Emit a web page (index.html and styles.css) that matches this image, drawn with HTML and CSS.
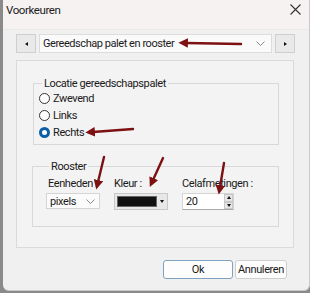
FILE: index.html
```html
<!DOCTYPE html>
<html lang="nl">
<head>
  <meta charset="UTF-8">
  <title>Voorkeuren</title>
  <link rel="stylesheet" href="styles.css">
</head>
<body>
  <div class="dialog">
    <div class="titlebar">
      <span class="title">Voorkeuren</span>
      <svg class="close" width="11" height="11" viewBox="0 0 11 11">
        <path d="M0.5 0.5 L10.5 10.5 M10.5 0.5 L0.5 10.5" stroke="#333" stroke-width="1.1"/>
      </svg>
    </div>

    <div class="nav">
      <button class="nav-btn"><span class="tri-left"></span></button>
      <div class="combo">
        <span>Gereedschap palet en rooster</span>
        <svg class="chev" width="9" height="5" viewBox="0 0 9 5"><path d="M0.5 0.5 L4.5 4.5 L8.5 0.5" fill="none" stroke="#888" stroke-width="1"/></svg>
      </div>
      <button class="nav-btn"><span class="tri-right"></span></button>
    </div>

    <div class="panel">
      <fieldset class="group group-loc">
        <legend>Locatie gereedschapspalet</legend>
        <label class="radio"><span class="dot"></span>Zwevend</label>
        <label class="radio"><span class="dot"></span>Links</label>
        <label class="radio"><span class="dot checked"></span>Rechts</label>
      </fieldset>

      <fieldset class="group group-grid">
        <legend>Rooster</legend>
        <div class="fields">
          <div class="field">
            <div class="lbl lbl-first">Eenheden</div>
            <div class="select">
              <span>pixels</span>
              <svg width="9" height="5" viewBox="0 0 9 5"><path d="M0.5 0.5 L4.5 4.5 L8.5 0.5" fill="none" stroke="#888" stroke-width="1"/></svg>
            </div>
          </div>
          <div class="field">
            <div class="lbl">Kleur :</div>
            <div class="color">
              <span class="swatch"></span>
              <span class="color-btn"><span class="tri-down"></span></span>
            </div>
          </div>
          <div class="field">
            <div class="lbl">Celafmetingen :</div>
            <div class="spin">
              <span class="spin-val">20</span>
              <span class="spin-btns">
                <span class="spin-b"><span class="tri-up"></span></span>
                <span class="spin-b"><span class="tri-down"></span></span>
              </span>
            </div>
          </div>
        </div>
      </fieldset>
    </div>

    <div class="actions">
      <button class="btn btn-ok">Ok</button>
      <button class="btn btn-cancel">Annuleren</button>
    </div>

    <svg class="arrows" width="310" height="293" viewBox="0 0 310 293">
      <defs>
        <marker id="head" viewBox="0 0 10 10" refX="2" refY="5" markerWidth="4" markerHeight="4" orient="auto-start-reverse">
          <path d="M0 0 L10 5 L0 10 z" fill="#7d1012"/>
        </marker>
      </defs>
      <g stroke="#7d1012" stroke-width="2.4" fill="none" stroke-linecap="round">
        <path d="M241 44 L186 43" marker-end="url(#head)"/>
        <path d="M133 129 L93 132" marker-end="url(#head)"/>
        <path d="M104 157 L98 182" marker-end="url(#head)"/>
        <path d="M163 158 L153 180" marker-end="url(#head)"/>
        <path d="M224 163 L220 187" marker-end="url(#head)"/>
      </g>
    </svg>
  </div>
</body>
</html>
```

FILE: styles.css
```css
body {
  margin: 0;
  font-family: Roboto, "Noto Sans", Arial, sans-serif;
  font-size: 11px;
  letter-spacing: -0.4px;
  color: #1a1a1a;
  background: #8a8a8a;
}
.dialog {
  position: relative;
  width: 306px;
  height: 290px;
  margin-left: 3px;
  background: #f0f0f0;
  border-right: 1px solid #c9c9c9;
  border-bottom: 1px solid #c9c9c9;
  border-radius: 0 0 6px 6px;
  overflow: hidden;
}
.titlebar {
  height: 30px;
  display: flex;
  align-items: center;
  justify-content: space-between;
  padding: 0 8px 0 3px;
  background: #f6f2f2;
  box-sizing: border-box;
  border-bottom: 1px solid #ebe8e8;
}
.title {
  font-size: 11.5px;
  margin-top: -10px;
}
.close {
  margin-top: -10px;
}
.nav {
  display: flex;
  gap: 3px;
  margin: 4px 0 0 13px;
  height: 19px;
}
.nav-btn {
  width: 20px;
  height: 19px;
  padding: 0;
  border: 1px solid #cfcfcf;
  background: #e9e9e9;
  display: flex;
  align-items: center;
  justify-content: center;
}
.tri-left, .tri-right, .tri-up, .tri-down {
  display: block;
  width: 0;
  height: 0;
  border: 2.5px solid transparent;
}
.tri-left { border-right: 3px solid #111; border-left: 0; }
.tri-right { border-left: 3px solid #111; border-right: 0; }
.tri-up { border-bottom: 3px solid #111; border-top: 0; }
.tri-down { border-top: 3px solid #111; border-bottom: 0; }
.combo {
  width: 233px;
  box-sizing: border-box;
  border: 1px solid #dcdcdc;
  background: #fafafa;
  display: flex;
  align-items: center;
  justify-content: space-between;
  padding: 0 6px 0 3px;
  font-size: 11px;
  letter-spacing: -0.45px;
}
.panel {
  margin: 7px 0 0 13px;
  width: 278px;
  height: 188px;
  box-sizing: border-box;
  border: 1px solid #dadada;
  background: #f3f3f3;
  padding: 16px 14px 0 16px;
}
.group {
  margin: 0;
  padding: 0 0 0 5px;
  border: 1px solid #d8d8d8;
  min-width: 0;
}
.group legend {
  padding: 0 2px;
  margin-left: 3px;
}
.group-loc {
  height: 68px;
  box-sizing: border-box;
  display: flex;
  flex-direction: column;
}
.radio {
  display: flex;
  align-items: center;
  gap: 3px;
  height: 17px;
}
.dot {
  width: 11px;
  height: 11px;
  border: 1px solid #333;
  border-radius: 50%;
  background: #fff;
  box-sizing: border-box;
}
.dot.checked {
  border: 3px solid #0a5fa8;
}
.group-grid {
  margin-top: 15px;
  margin-left: -1px;
  height: 67px;
  box-sizing: border-box;
  padding: 2px 0 0 13px;
}
.fields {
  display: flex;
  gap: 14px;
}
.lbl {
  height: 17px;
  line-height: 17px;
  margin-bottom: 1px;
}
.lbl-first {
  padding-left: 2px;
}
.select {
  width: 54px;
  height: 16px;
  box-sizing: border-box;
  border: 1px solid #d4d4d4;
  background: #fbfbfb;
  display: flex;
  align-items: center;
  justify-content: space-between;
  padding: 0 4px 0 3px;
}
.color {
  width: 54px;
  height: 17px;
  box-sizing: border-box;
  border: 1px solid #c8c8c8;
  background: #e8e8e8;
  display: flex;
  padding: 2px 0 2px 2px;
}
.swatch {
  flex: 1;
  background: #111;
  border: 1px solid #666;
}
.color-btn {
  width: 10px;
  display: flex;
  align-items: center;
  justify-content: center;
}
.spin {
  width: 52px;
  height: 17px;
  box-sizing: border-box;
  border: 1px solid #d4d4d4;
  border-bottom-color: #aaa;
  background: #fff;
  display: flex;
  justify-content: space-between;
}
.spin-val {
  padding-left: 3px;
  line-height: 15px;
}
.spin-btns {
  display: flex;
  flex-direction: column;
  width: 9px;
}
.spin-b {
  flex: 1;
  background: #e6e6e6;
  border: 1px solid #c8c8c8;
  display: flex;
  align-items: center;
  justify-content: center;
}
.actions {
  display: flex;
  justify-content: flex-end;
  gap: 2px;
  margin: 12px 22px 0 0;
}
.btn {
  height: 19px;
  padding: 0;
  font-family: inherit;
  font-size: 11px;
  letter-spacing: -0.4px;
  color: #1a1a1a;
  background: #fdfdfd;
  border: 1px solid #cfcfcf;
  border-radius: 3px;
}
.btn-ok {
  width: 70px;
  border: 1px solid #7ea2c0;
}
.btn-cancel {
  width: 52px;
}
.arrows {
  position: absolute;
  left: -3px;
  top: 0;
  pointer-events: none;
}
```
